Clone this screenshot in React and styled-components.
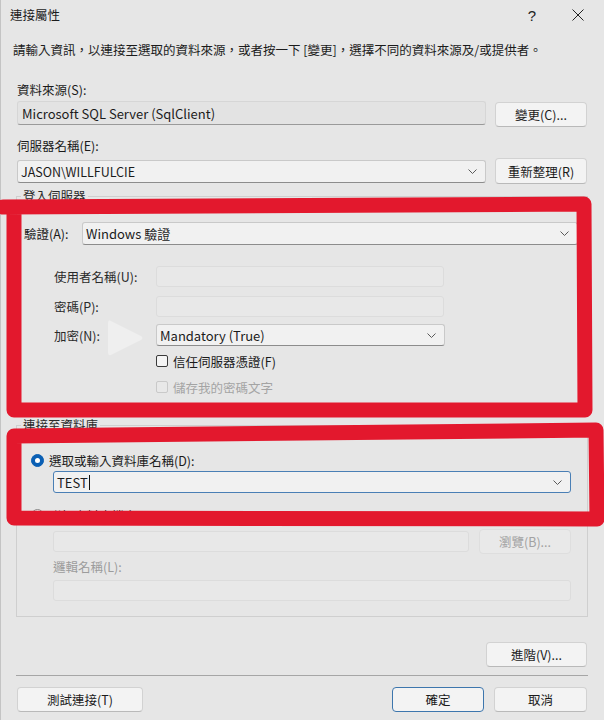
import React from "react";
import styled, { createGlobalStyle } from "styled-components";

const GlobalStyle = createGlobalStyle`
	html, body {
		margin: 0;
		padding: 0;
		background: #e6e6e6;
	}
`;

const Window = styled.div`
	position: relative;
	width: 604px;
	height: 720px;
	overflow: hidden;
	background: #e6e6e6;
	box-shadow: inset 1px 0 0 #c4c4c4;
	font-family: "Noto Sans CJK TC", "Noto Sans", sans-serif;
	font-size: 12.5px;
	color: #1b1b1b;
`;

const TitleBar = styled.div`
	display: flex;
	align-items: center;
	height: 30px;
	padding-left: 10px;
`;

const Title = styled.div`
	line-height: 18px;
`;

const TitleButtons = styled.div`
	display: flex;
	margin-left: auto;
	margin-right: 3px;
`;

const TitleButton = styled.div`
	display: flex;
	align-items: center;
	justify-content: center;
	width: 46px;
	height: 30px;
	font-family: "Liberation Sans", sans-serif;
	font-size: 15px;
	color: #222;
`;

const Content = styled.div`
	padding: 0 17px;
`;

const Instruction = styled.div`
	margin: 11px 0 0 -4px;
	line-height: 18px;
	white-space: nowrap;
`;

const Label = styled.div`
	line-height: 18px;
	margin-top: ${(p) => p.$mt ?? 0}px;
	margin-left: ${(p) => p.$ml ?? 0}px;
	color: ${(p) => (p.$disabled ? "#9c9c9c" : "#1b1b1b")};
	white-space: nowrap;
`;

const Row = styled.div`
	display: flex;
	align-items: ${(p) => p.$align || "center"};
	gap: ${(p) => p.$gap ?? 9}px;
	margin-top: ${(p) => p.$mt ?? 0}px;
	margin-left: ${(p) => p.$ml ?? 0}px;
	justify-content: ${(p) => p.$justify || "flex-start"};
`;

const TextBox = styled.div`
	box-sizing: border-box;
	display: flex;
	align-items: center;
	flex: ${(p) => (p.$w ? "none" : 1)};
	width: ${(p) => (p.$w ? p.$w + "px" : "auto")};
	height: ${(p) => p.$h ?? 21}px;
	padding: 0 4px;
	border-radius: 3px;
	background: ${(p) => (p.$readOnly ? "#e3e3e3" : "#e8e8e8")};
	border: 1px solid ${(p) => (p.$readOnly ? "#d6d6d6" : "#dcdcdc")};
	border-bottom-color: ${(p) => (p.$readOnly ? "#9a9a9a" : "#dcdcdc")};
	font-size: 13px;
	white-space: nowrap;
`;

const ComboBox = styled.div`
	box-sizing: border-box;
	display: flex;
	align-items: center;
	flex: ${(p) => (p.$w ? "none" : 1)};
	width: ${(p) => (p.$w ? p.$w + "px" : "auto")};
	height: ${(p) => p.$h ?? 23}px;
	padding: 0 8px 0 3px;
	border-radius: 3px;
	background: #f1f1f1;
	border: 1px solid ${(p) => (p.$focused ? "#4a7fb5" : "#c9c9c9")};
	border-bottom-color: ${(p) => (p.$focused ? "#4a7fb5" : "#8c8c8c")};
	white-space: nowrap;
`;

const ComboText = styled.span`
	flex: 1;
	display: flex;
	align-items: center;
	font-size: ${(p) => p.$size ?? 12.5}px;
`;

const Caret = styled.span`
	display: inline-block;
	width: 1px;
	height: 15px;
	margin-left: 1px;
	background: #111;
`;

const Chevron = () => (
	<svg width="9" height="5" viewBox="0 0 9 5">
		<path d="M0.5 0.5 L4.5 4.5 L8.5 0.5" fill="none" stroke="#5a5a5a" strokeWidth="1" />
	</svg>
);

const Button = styled.div`
	box-sizing: border-box;
	display: flex;
	align-items: center;
	justify-content: center;
	flex: none;
	width: ${(p) => p.$w ?? 92}px;
	height: ${(p) => p.$h ?? 25}px;
	margin-top: ${(p) => p.$mt ?? 0}px;
	border-radius: 4px;
	background: ${(p) => (p.$disabled ? "#e9e9e9" : "#f3f3f3")};
	border: 1px solid ${(p) => (p.$primary ? "#3d76ad" : p.$disabled ? "#dedede" : "#d2d2d2")};
	border-bottom-color: ${(p) => (p.$primary ? "#3d76ad" : p.$disabled ? "#dedede" : "#b9b9b9")};
	color: ${(p) => (p.$disabled ? "#a2a2a2" : "#1b1b1b")};
	white-space: nowrap;
`;

const Group = styled.fieldset`
	margin: ${(p) => p.$mt ?? 0}px -1px 0;
	padding: 17px ${(p) => p.$pr ?? 9}px ${(p) => p.$pb ?? 10}px 7px;
	border: 1px solid #cfcfcf;
	border-radius: 0;
	min-width: 0;
`;

const Legend = styled.legend`
	padding: 0 2px;
	margin-left: -3px;
	line-height: 18px;
	color: #2a2a2a;
`;

const AuthLabel = styled.div`
	width: 58px;
	flex: none;
`;

const FieldLine = styled.div`
	display: flex;
	align-items: center;
	margin-top: ${(p) => p.$mt ?? 0}px;
	padding-left: 30px;
	height: ${(p) => p.$h ?? 21}px;
`;

const FieldLabel = styled.div`
	width: 102px;
	flex: none;
	color: #2a2a2a;
`;

const CheckLine = styled.div`
	display: flex;
	align-items: center;
	gap: 5px;
	height: 18px;
	margin-top: ${(p) => p.$mt ?? 0}px;
	padding-left: 132px;
	color: ${(p) => (p.$disabled ? "#a4a4a4" : "#1b1b1b")};
`;

const CheckBox = styled.span`
	box-sizing: border-box;
	width: 12px;
	height: 12px;
	border-radius: 2px;
	border: 1px solid ${(p) => (p.$disabled ? "#c9c9c9" : "#3a3a3a")};
	background: ${(p) => (p.$disabled ? "#e8e8e8" : "#f4f4f4")};
`;

const RadioLine = styled.div`
	display: flex;
	align-items: center;
	gap: 5px;
	height: 18px;
	margin-top: ${(p) => p.$mt ?? 0}px;
	padding-left: 7px;
	color: #1b1b1b;
`;

const Radio = styled.span`
	box-sizing: border-box;
	display: flex;
	align-items: center;
	justify-content: center;
	width: 13px;
	height: 13px;
	border-radius: 50%;
	background: ${(p) => (p.$checked ? "#0a5fb4" : "#ececec")};
	border: 1px solid ${(p) => (p.$checked ? "#0a5fb4" : "#8a8a8a")};

	&::after {
		content: "";
		display: ${(p) => (p.$checked ? "block" : "none")};
		width: 5px;
		height: 5px;
		border-radius: 50%;
		background: #fff;
	}
`;

const Separator = styled.div`
	height: 1px;
	margin: 8px -1px 0;
	background: #a6a6a6;
`;

const Footer = styled.div`
	display: flex;
	align-items: center;
	gap: 10px;
	margin-top: 11px;
`;

const Spacer = styled.div`
	flex: 1;
`;

const Overlay = styled.svg`
	position: absolute;
	top: 0;
	left: 0;
	pointer-events: none;
`;

export default function App() {
	return (
		<>
			<GlobalStyle />
			<Window>
				<TitleBar>
					<Title>連接屬性</Title>
					<TitleButtons>
						<TitleButton>?</TitleButton>
						<TitleButton>
							<svg width="12" height="12" viewBox="0 0 12 12">
								<path d="M0.5 0.5 L11.5 11.5 M11.5 0.5 L0.5 11.5" stroke="#222" strokeWidth="1" />
							</svg>
						</TitleButton>
					</TitleButtons>
				</TitleBar>

				<Content>
					<Instruction>
						請輸入資訊，以連接至選取的資料來源，或者按一下 [變更]，選擇不同的資料來源及/或提供者。
					</Instruction>

					<Label $mt={22}>資料來源(S):</Label>
					<Row $mt={2} $align="flex-start" $gap={9}>
						<TextBox $readOnly $h={24}>Microsoft SQL Server (SqlClient)</TextBox>
						<Button $mt={1}>變更(C)...</Button>
					</Row>

					<Label $mt={10}>伺服器名稱(E):</Label>
					<Row $mt={3} $gap={9}>
						<ComboBox $h={23}>
							<ComboText>JASON\WILLFULCIE</ComboText>
							<Chevron />
						</ComboBox>
						<Button $h={26}>重新整理(R)</Button>
					</Row>

					<Group $mt={3}>
						<Legend>登入伺服器</Legend>
						<Row $gap={0}>
							<AuthLabel>驗證(A):</AuthLabel>
							<ComboBox $h={23}>
								<ComboText $size={13}>Windows 驗證</ComboText>
								<Chevron />
							</ComboBox>
						</Row>
						<FieldLine $mt={21}>
							<FieldLabel>使用者名稱(U):</FieldLabel>
							<TextBox $w={288} />
						</FieldLine>
						<FieldLine $mt={9}>
							<FieldLabel>密碼(P):</FieldLabel>
							<TextBox $w={288} />
						</FieldLine>
						<FieldLine $mt={7} $h={22}>
							<FieldLabel>加密(N):</FieldLabel>
							<ComboBox $w={289} $h={22}>
								<ComboText $size={13}>Mandatory (True)</ComboText>
								<Chevron />
							</ComboBox>
						</FieldLine>
						<CheckLine $mt={6}>
							<CheckBox />
							信任伺服器憑證(F)
						</CheckLine>
						<CheckLine $mt={8} $disabled>
							<CheckBox $disabled />
							儲存我的密碼文字
						</CheckLine>
					</Group>

					<Group $mt={9} $pr={16} $pb={15}>
						<Legend>連接至資料庫</Legend>
						<RadioLine>
							<Radio $checked />
							選取或輸入資料庫名稱(D):
						</RadioLine>
						<Row $mt={2} $ml={29}>
							<ComboBox $h={22} $focused>
								<ComboText $size={13}>
									TEST
									<Caret />
								</ComboText>
								<Chevron />
							</ComboBox>
						</Row>
						<RadioLine $mt={13}>
							<Radio />
							附加資料庫檔案(H):
						</RadioLine>
						<Row $mt={5} $ml={29} $gap={10}>
							<TextBox />
							<Button $disabled>瀏覽(B)...</Button>
						</Row>
						<Label $mt={4} $ml={29} $disabled>
							邏輯名稱(L):
						</Label>
						<Row $mt={4} $ml={29}>
							<TextBox />
						</Row>
					</Group>

					<Row $mt={25} $justify="flex-end">
						<Button $w={101}>進階(V)...</Button>
					</Row>

					<Separator />

					<Footer>
						<Button $w={126}>測試連接(T)</Button>
						<Spacer />
						<Button $w={92} $primary>
							確定
						</Button>
						<Button $w={93}>取消</Button>
					</Footer>
				</Content>

				{/* video play watermark and red hand-drawn annotations */}
				<Overlay width="604" height="720" viewBox="0 0 604 720">
					<path
						d="M111 321 L141 336 Q144 338 141 340 L111 355 Q108 356 108 353 L108 323 Q108 319 111 321 Z"
						fill="#ffffff"
						opacity="0.35"
					/>
					<path
						d="M3 207 L584 204 L585 410 L14 410 L14 207"
						fill="none"
						stroke="#e3182d"
						strokeWidth="15"
						strokeLinejoin="round"
						strokeLinecap="round"
					/>
					<path
						d="M14 436 L596 430 L597 519 L14 518 Z"
						fill="none"
						stroke="#e3182d"
						strokeWidth="15"
						strokeLinejoin="round"
						strokeLinecap="round"
					/>
				</Overlay>
			</Window>
		</>
	);
}
